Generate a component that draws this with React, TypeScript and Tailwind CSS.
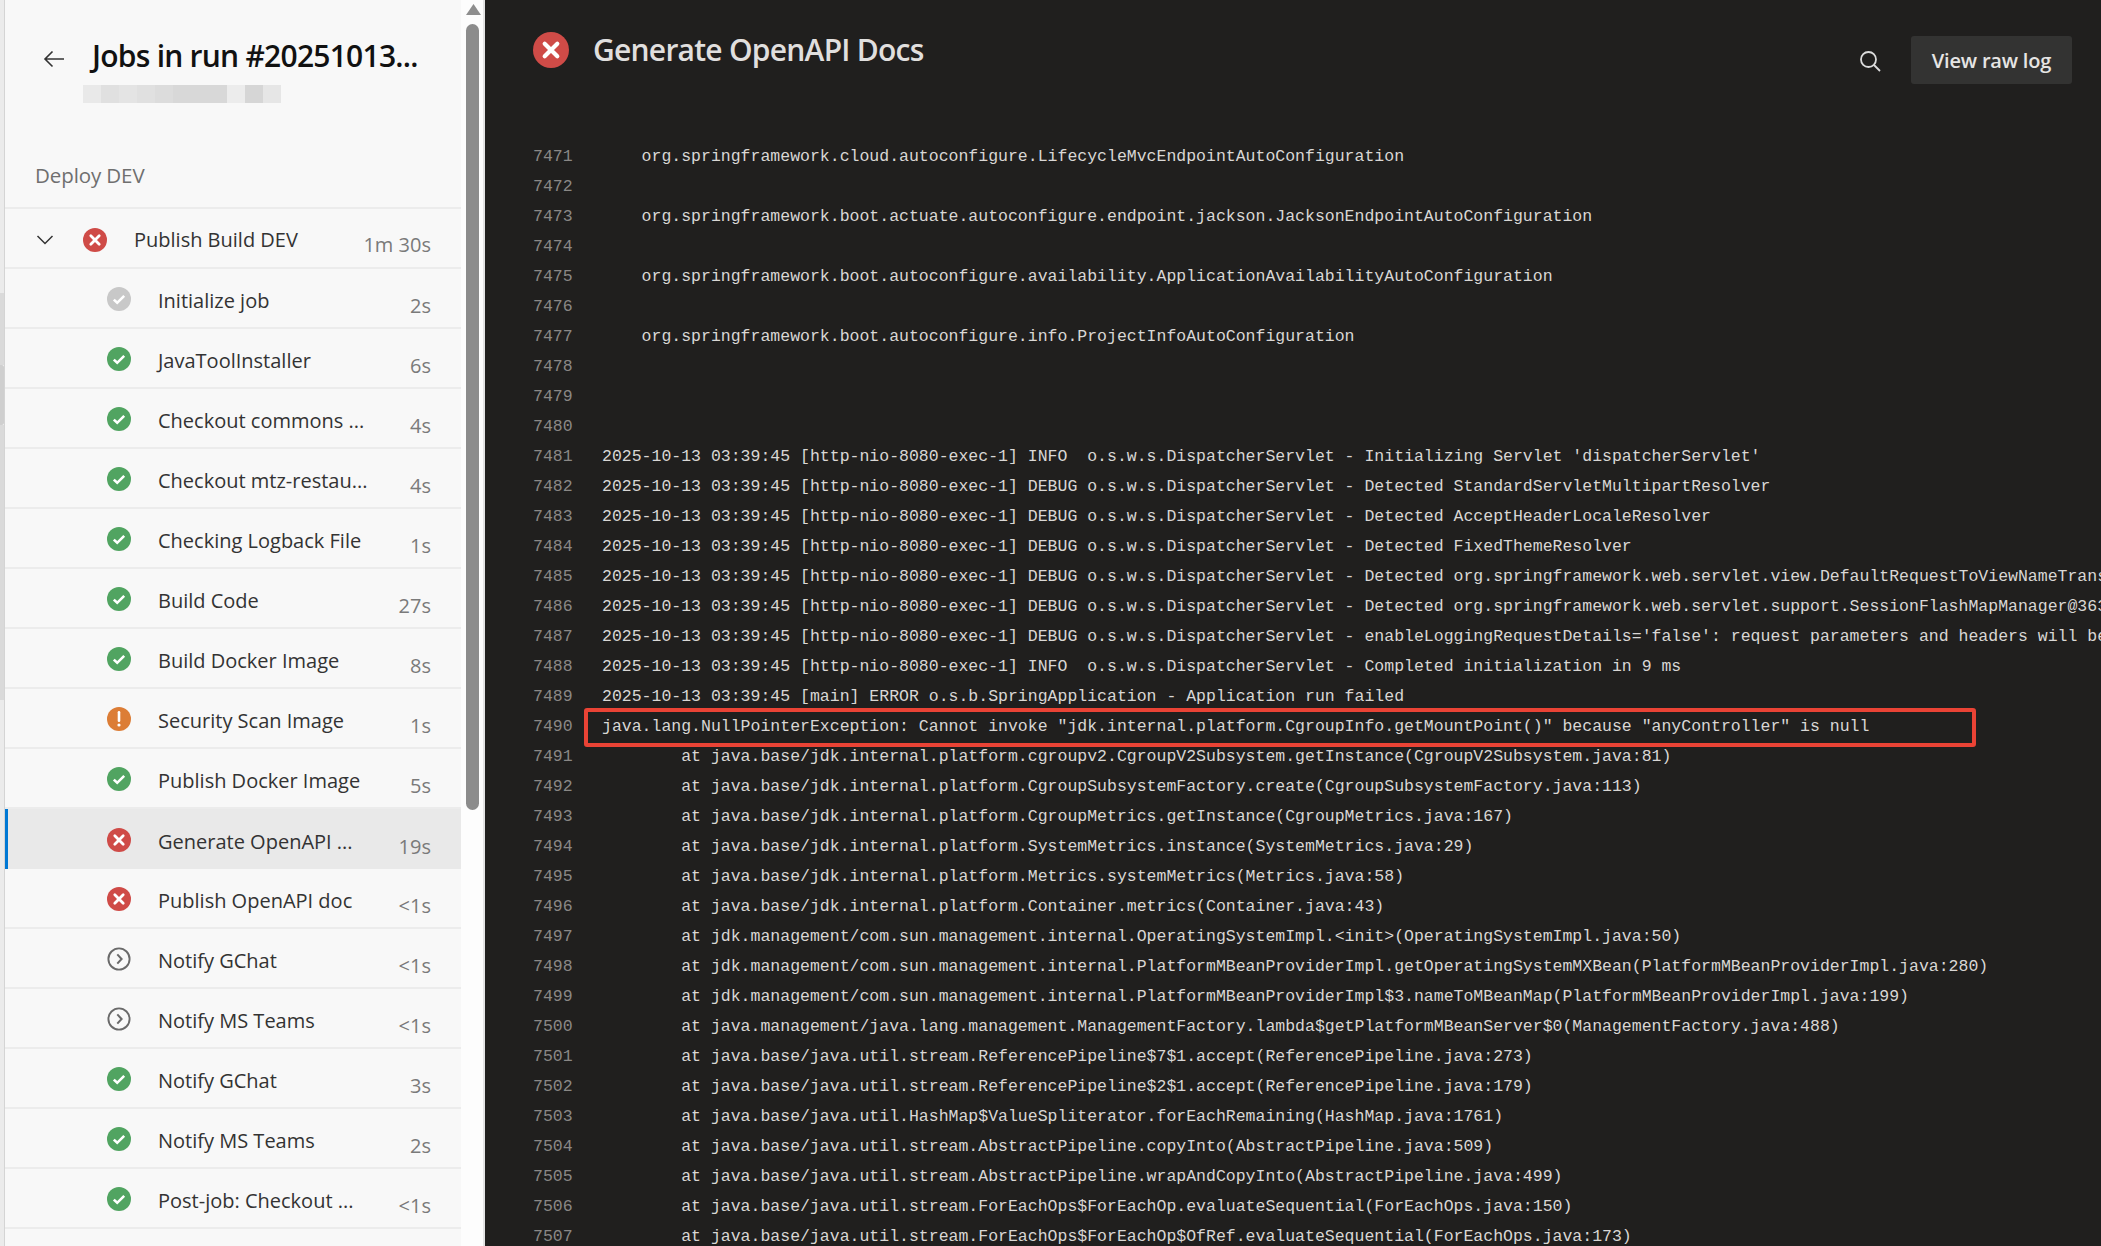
import React from "react";

type Kind = "ok" | "done" | "err" | "warn" | "skip";

function StatusIcon({ kind, size = 24 }: { kind: Kind; size?: number }) {
  const fill = { ok: "#51a461", done: "#c8c8c8", err: "#cf4b47", warn: "#dc7d36", skip: "none" }[kind];
  return (
    <svg width={size} height={size} viewBox="0 0 24 24" className="shrink-0">
      {kind === "skip" ? (
        <>
          <circle cx="12" cy="12" r="10.6" fill="none" stroke="#6a6a6a" strokeWidth="1.9" />
          <path d="M10.3 7.4 14.6 12l-4.3 4.6" fill="none" stroke="#6a6a6a" strokeWidth="2" />
        </>
      ) : (
        <>
          <circle cx="12" cy="12" r="12" fill={fill} />
          {(kind === "ok" || kind === "done") && (
            <path d="M6.8 12.6l3.4 3.2 7-7" fill="none" stroke="#fff" strokeWidth="2.6" />
          )}
          {kind === "err" && (
            <path d="M7.8 7.8l8.4 8.4M16.2 7.8l-8.4 8.4" fill="none" stroke="#fff" strokeWidth="2.8" strokeLinecap="round" />
          )}
          {kind === "warn" && (
            <>
              <path d="M12 5.2v8.6" fill="none" stroke="#fff" strokeWidth="2.6" strokeLinecap="round" />
              <circle cx="12" cy="18" r="1.6" fill="#fff" />
            </>
          )}
        </>
      )}
    </svg>
  );
}

const jobs: { name: string; time: string; kind: Kind; active?: boolean }[] = [
  { name: "Initialize job", time: "2s", kind: "done" },
  { name: "JavaToolInstaller", time: "6s", kind: "ok" },
  { name: "Checkout commons ...", time: "4s", kind: "ok" },
  { name: "Checkout mtz-restau...", time: "4s", kind: "ok" },
  { name: "Checking Logback File", time: "1s", kind: "ok" },
  { name: "Build Code", time: "27s", kind: "ok" },
  { name: "Build Docker Image", time: "8s", kind: "ok" },
  { name: "Security Scan Image", time: "1s", kind: "warn" },
  { name: "Publish Docker Image", time: "5s", kind: "ok" },
  { name: "Generate OpenAPI ...", time: "19s", kind: "err", active: true },
  { name: "Publish OpenAPI doc", time: "<1s", kind: "err" },
  { name: "Notify GChat", time: "<1s", kind: "skip" },
  { name: "Notify MS Teams", time: "<1s", kind: "skip" },
  { name: "Notify GChat", time: "3s", kind: "ok" },
  { name: "Notify MS Teams", time: "2s", kind: "ok" },
  { name: "Post-job: Checkout ...", time: "<1s", kind: "ok" },
];

const mosaic = ["#e9e9e9", "#e0e0e0", "#e4e4e4", "#e0e0e0", "#dcdcdc", "#d8d8d8", "#d8d8d8", "#d8d8d8", "#ececec", "#d6d6d6", "#e6e6e6"];

const T = "2025-10-13 03:39:45 ";
const E = T + "[http-nio-8080-exec-1] ";
const A = "        at ";
const logs: string[] = [
  "    org.springframework.cloud.autoconfigure.LifecycleMvcEndpointAutoConfiguration",
  "",
  "    org.springframework.boot.actuate.autoconfigure.endpoint.jackson.JacksonEndpointAutoConfiguration",
  "",
  "    org.springframework.boot.autoconfigure.availability.ApplicationAvailabilityAutoConfiguration",
  "",
  "    org.springframework.boot.autoconfigure.info.ProjectInfoAutoConfiguration",
  "",
  "",
  "",
  E + "INFO  o.s.w.s.DispatcherServlet - Initializing Servlet 'dispatcherServlet'",
  E + "DEBUG o.s.w.s.DispatcherServlet - Detected StandardServletMultipartResolver",
  E + "DEBUG o.s.w.s.DispatcherServlet - Detected AcceptHeaderLocaleResolver",
  E + "DEBUG o.s.w.s.DispatcherServlet - Detected FixedThemeResolver",
  E + "DEBUG o.s.w.s.DispatcherServlet - Detected org.springframework.web.servlet.view.DefaultRequestToViewNameTrans",
  E + "DEBUG o.s.w.s.DispatcherServlet - Detected org.springframework.web.servlet.support.SessionFlashMapManager@363",
  E + "DEBUG o.s.w.s.DispatcherServlet - enableLoggingRequestDetails='false': request parameters and headers will be",
  E + "INFO  o.s.w.s.DispatcherServlet - Completed initialization in 9 ms",
  T + "[main] ERROR o.s.b.SpringApplication - Application run failed",
  'java.lang.NullPointerException: Cannot invoke "jdk.internal.platform.CgroupInfo.getMountPoint()" because "anyController" is null',
  A + "java.base/jdk.internal.platform.cgroupv2.CgroupV2Subsystem.getInstance(CgroupV2Subsystem.java:81)",
  A + "java.base/jdk.internal.platform.CgroupSubsystemFactory.create(CgroupSubsystemFactory.java:113)",
  A + "java.base/jdk.internal.platform.CgroupMetrics.getInstance(CgroupMetrics.java:167)",
  A + "java.base/jdk.internal.platform.SystemMetrics.instance(SystemMetrics.java:29)",
  A + "java.base/jdk.internal.platform.Metrics.systemMetrics(Metrics.java:58)",
  A + "java.base/jdk.internal.platform.Container.metrics(Container.java:43)",
  A + "jdk.management/com.sun.management.internal.OperatingSystemImpl.<init>(OperatingSystemImpl.java:50)",
  A + "jdk.management/com.sun.management.internal.PlatformMBeanProviderImpl.getOperatingSystemMXBean(PlatformMBeanProviderImpl.java:280)",
  A + "jdk.management/com.sun.management.internal.PlatformMBeanProviderImpl$3.nameToMBeanMap(PlatformMBeanProviderImpl.java:199)",
  A + "java.management/java.lang.management.ManagementFactory.lambda$getPlatformMBeanServer$0(ManagementFactory.java:488)",
  A + "java.base/java.util.stream.ReferencePipeline$7$1.accept(ReferencePipeline.java:273)",
  A + "java.base/java.util.stream.ReferencePipeline$2$1.accept(ReferencePipeline.java:179)",
  A + "java.base/java.util.HashMap$ValueSpliterator.forEachRemaining(HashMap.java:1761)",
  A + "java.base/java.util.stream.AbstractPipeline.copyInto(AbstractPipeline.java:509)",
  A + "java.base/java.util.stream.AbstractPipeline.wrapAndCopyInto(AbstractPipeline.java:499)",
  A + "java.base/java.util.stream.ForEachOps$ForEachOp.evaluateSequential(ForEachOps.java:150)",
  A + "java.base/java.util.stream.ForEachOps$ForEachOp$OfRef.evaluateSequential(ForEachOps.java:173)",
];

export default function App() {
  return (
    <div className="flex h-[1246px] w-[2101px] overflow-hidden bg-[#201f1e] font-['Open_Sans',sans-serif]">
      <div className="flex w-[485px] shrink-0 bg-[#f8f8f8]">
        <div className="flex w-[5px] shrink-0 flex-col border-r border-[#d4d4d4]">
          <div className="h-[293px] bg-[#ebebeb]" />
          <div className="h-[72px] bg-[#dadada]" />
          <div className="h-[60px] rounded-r-[2px] bg-[#cfcfcf]" />
          <div className="h-[275px] bg-[#dadada]" />
          <div className="flex-1 bg-[#ebebeb]" />
        </div>
        <div className="flex w-[456px] shrink-0 flex-col">
          <div className="flex h-[85px] shrink-0 items-end pl-[36px]">
            <svg width="26" height="26" viewBox="0 0 26 26" className="mb-[13px] shrink-0">
              <path d="M23 13H4M11.5 5.5 4 13l7.5 7.5" fill="none" stroke="#333" strokeWidth="1.6" />
            </svg>
            <div className="ml-[25px] whitespace-nowrap pb-[9px] text-[30px] leading-[40px] font-semibold tracking-[-0.75px] text-[#111]">
              Jobs in run #20251013...
            </div>
          </div>
          <div className="ml-[78px] flex h-[18px] shrink-0">
            {mosaic.map((c, i) => (
              <div key={i} className="h-full w-[18px]" style={{ background: c }} />
            ))}
          </div>
          <div className="flex h-[106px] shrink-0 items-end border-b-[2px] border-[#ececec] pb-[17px] pl-[30px] text-[20.5px] leading-[30px] tracking-[-0.1px] text-[#6f6f6f]">
            Deploy DEV
          </div>
          <div className="flex h-[60px] shrink-0 items-center border-b-[2px] border-[#ececec] pt-[4px] pr-[30px] pl-[31px]">
            <svg width="18" height="18" viewBox="0 0 18 18" className="shrink-0">
              <path d="M1.5 5 9 12.5 16.5 5" fill="none" stroke="#333" strokeWidth="1.5" />
            </svg>
            <div className="ml-[29px]"><StatusIcon kind="err" /></div>
            <div className="ml-[27px] flex-1 text-[20px] text-[#333]">Publish Build DEV</div>
            <div className="mt-[10px] text-[20px] text-[#7a7a7a]">1m 30s</div>
          </div>
          {jobs.map((j, i) => (
            <div
              key={i}
              className={
                j.active
                  ? "flex h-[60px] shrink-0 items-center border-l-[3px] border-[#0078d4] bg-[#e9e9e9] pt-[6px] pr-[30px] pl-[99px]"
                  : "flex h-[60px] shrink-0 items-center border-b-[2px] border-[#ececec] pt-[6px] pr-[30px] pl-[102px]"
              }
            >
              <div className="mb-[4px]"><StatusIcon kind={j.kind} /></div>
              <div className="ml-[27px] flex-1 whitespace-nowrap text-[20px] text-[#333]">{j.name}</div>
              <div className="mt-[10px] text-[20px] text-[#7a7a7a]">{j.time}</div>
            </div>
          ))}
        </div>
        <div className="w-[24px] shrink-0 border-r-[2px] border-[#e4e4e4] bg-[#fdfdfd]">
          <svg width="15" height="11" viewBox="0 0 15 11" className="mt-[4px] ml-[5px]">
            <path d="M7.5 0 15 11H0z" fill="#8e8e8e" />
          </svg>
          <div className="mt-[9px] ml-[5px] h-[786px] w-[13px] rounded-full bg-[#8c8c8c]" />
        </div>
      </div>

      <div className="flex min-w-0 flex-1 flex-col">
        <div className="flex h-[142px] shrink-0 items-start pt-[32px] pr-[29px] pl-[48px]">
          <StatusIcon kind="err" size={36} />
          <div className="ml-[24px] flex-1 whitespace-nowrap text-[30px] leading-[36px] font-semibold tracking-[-0.75px] text-[#e0dfde]">
            Generate OpenAPI Docs
          </div>
          <svg width="22" height="22" viewBox="0 0 22 22" className="mt-[18px] shrink-0">
            <circle cx="9.5" cy="9.5" r="7.5" fill="none" stroke="#dcdcdc" strokeWidth="1.8" />
            <path d="M15 15l6 6" fill="none" stroke="#dcdcdc" strokeWidth="1.8" />
          </svg>
          <div className="mt-[4px] ml-[30px] flex h-[48px] w-[161px] items-center justify-center rounded-[3px] bg-[#333332] pt-[1px] text-[20px] font-semibold tracking-[-0.2px] text-[#e6e5e4]">
            View raw log
          </div>
        </div>
        <div className="relative min-h-0 flex-1 overflow-hidden pl-[48px] font-['Liberation_Mono',monospace] text-[16.5px] leading-[30px]">
          {logs.map((l, i) => (
            <div key={i} className="flex h-[30px] whitespace-pre">
              <div className="w-[69px] shrink-0 text-[#8a8886]">{7471 + i}</div>
              <div className="text-[#d9d7d5]">{l}</div>
            </div>
          ))}
          <div className="absolute top-[566px] left-[99px] h-[39px] w-[1392px] rounded-[3px] border-[4px] border-[#ea4335]" />
        </div>
      </div>
    </div>
  );
}
